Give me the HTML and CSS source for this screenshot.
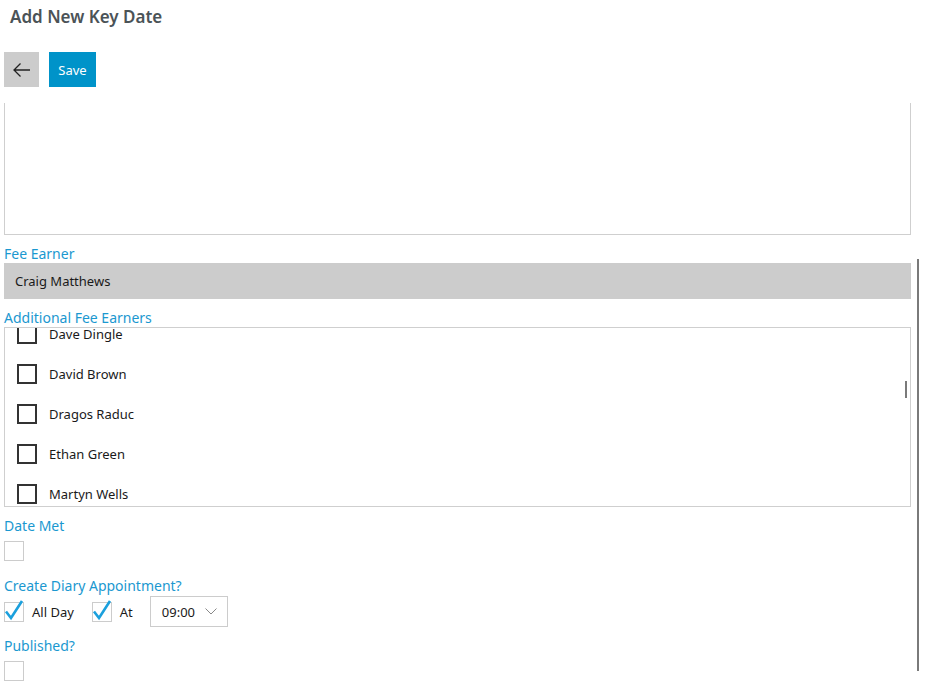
FILE: index.html
```html
<!DOCTYPE html>
<html lang="en">
<head>
<meta charset="utf-8">
<title>Add New Key Date</title>
<link rel="stylesheet" href="styles.css">
</head>
<body>
<div class="page">
  <h1 class="title">Add New Key Date</h1>
  <div class="toolbar">
    <button class="btn btn-back" aria-label="Back">
      <svg width="20" height="16" viewBox="0 0 20 16"><path d="M18 8H2M8.5 1.5L2 8l6.5 6.5" fill="none" stroke="#222" stroke-width="1.3"/></svg>
    </button>
    <button class="btn btn-save">Save</button>
  </div>
  <div class="scroller">
    <div class="form">
      <div class="notes"></div>
      <div class="label">Fee Earner</div>
      <div class="select-box">Craig Matthews</div>
      <div class="label">Additional Fee Earners</div>
      <div class="list">
        <div class="list-inner">
          <div class="item"><span class="box dark"></span><span>Dave Dingle</span></div>
          <div class="item"><span class="box dark"></span><span>David Brown</span></div>
          <div class="item"><span class="box dark"></span><span>Dragos Raduc</span></div>
          <div class="item"><span class="box dark"></span><span>Ethan Green</span></div>
          <div class="item"><span class="box dark"></span><span>Martyn Wells</span></div>
        </div>
        <div class="inner-thumb"></div>
      </div>
      <div class="label label-gap">Date Met</div>
      <div class="field"><span class="box light"></span></div>
      <div class="label label-gap2">Create Diary Appointment?</div>
      <div class="appt-row">
        <span class="box light checked"><svg width="22" height="22" viewBox="0 0 22 22"><path d="M3 12.5L8 19L19 2" fill="none" stroke="#1ba0dd" stroke-width="2.6"/></svg></span>
        <span class="opt-text">All Day</span>
        <span class="box light checked second"><svg width="22" height="22" viewBox="0 0 22 22"><path d="M3 12.5L8 19L19 2" fill="none" stroke="#1ba0dd" stroke-width="2.6"/></svg></span>
        <span class="opt-text">At</span>
        <div class="combo"><span>09:00</span><svg width="12" height="7" viewBox="0 0 12 7"><path d="M0.5 0.5L6 6L11.5 0.5" fill="none" stroke="#888" stroke-width="1"/></svg></div>
      </div>
      <div class="label label-gap3">Published?</div>
      <div class="field"><span class="box light"></span></div>
    </div>
    <div class="outer-thumb"></div>
  </div>
</div>
</body>
</html>
```

FILE: styles.css
```css
html, body {
  margin: 0;
  padding: 0;
  background: #ffffff;
}
body {
  font-family: "Noto Sans", "Open Sans", "Liberation Sans", sans-serif;
  color: #1a1a1a;
  width: 925px;
  height: 694px;
  overflow: hidden;
}
.page {
  display: flex;
  flex-direction: column;
  height: 694px;
}
.title {
  margin: 0;
  padding: 4px 0 0 10px;
  height: 26px;
  line-height: 26px;
  font-size: 17px;
  font-weight: 600;
  color: #4b5357;
}
.toolbar {
  display: flex;
  gap: 10px;
  padding: 22px 0 0 4px;
  height: 35px;
}
.btn {
  border: 0;
  margin: 0;
  padding: 0;
  height: 35px;
  display: flex;
  align-items: center;
  justify-content: center;
  font-family: inherit;
}
.btn-back {
  width: 35px;
  background: #cccccc;
}
.btn-save {
  width: 47px;
  background: #0093c9;
  color: #ffffff;
  font-size: 13px;
}
.scroller {
  position: relative;
  margin-top: 16px;
  flex: 1;
  overflow: hidden;
}
.form {
  padding-left: 4px;
  width: 907px;
}
.notes {
  height: 131px;
  border: 1px solid #cfcfcf;
  border-top: 0;
}
.label {
  font-size: 14px;
  line-height: 20px;
  color: #1b98d0;
  margin-top: 8px;
  padding-top: 1px;
  height: 19px;
}
.select-box {
  height: 36px;
  background: #cccccc;
  font-size: 13px;
  line-height: 36px;
  padding-left: 11px;
  color: #1a1a1a;
}
.list {
  position: relative;
  height: 178px;
  border: 1px solid #cfcfcf;
  overflow: hidden;
}
.list-inner {
  margin-top: -14px;
}
.item {
  display: flex;
  align-items: center;
  height: 40px;
  padding-left: 12px;
  gap: 12px;
  font-size: 13px;
}
.box {
  width: 20px;
  height: 20px;
  box-sizing: border-box;
  display: inline-block;
  flex: none;
  position: relative;
}
.box.dark {
  border: 2px solid #333333;
}
.box.light {
  border: 1px solid #cccccc;
}
.box.checked svg {
  position: absolute;
  left: -2px;
  top: -4px;
}
.inner-thumb {
  position: absolute;
  right: 3px;
  top: 53px;
  width: 2px;
  height: 17px;
  background: #7a7a7a;
}
.label-gap { margin-top: 8px; }
.label-gap2 { margin-top: 14px; }
.label-gap3 { margin-top: 8px; }
.field {
  height: 20px;
  margin-top: 6px;
  display: flex;
}
.appt-row {
  display: flex;
  align-items: center;
  height: 31px;
  margin-top: 1px;
  font-size: 13px;
}
.opt-text {
  margin-left: 8px;
}
.box.second {
  margin-left: 18px;
}
.combo {
  margin-left: 17px;
  width: 78px;
  height: 31px;
  box-sizing: border-box;
  border: 1px solid #cccccc;
  display: flex;
  align-items: center;
  justify-content: space-between;
  padding: 0 10px 0 11px;
  font-size: 13px;
}
.outer-thumb {
  position: absolute;
  left: 917px;
  top: 156px;
  width: 2px;
  height: 412px;
  background: #7a7a7a;
}
```
